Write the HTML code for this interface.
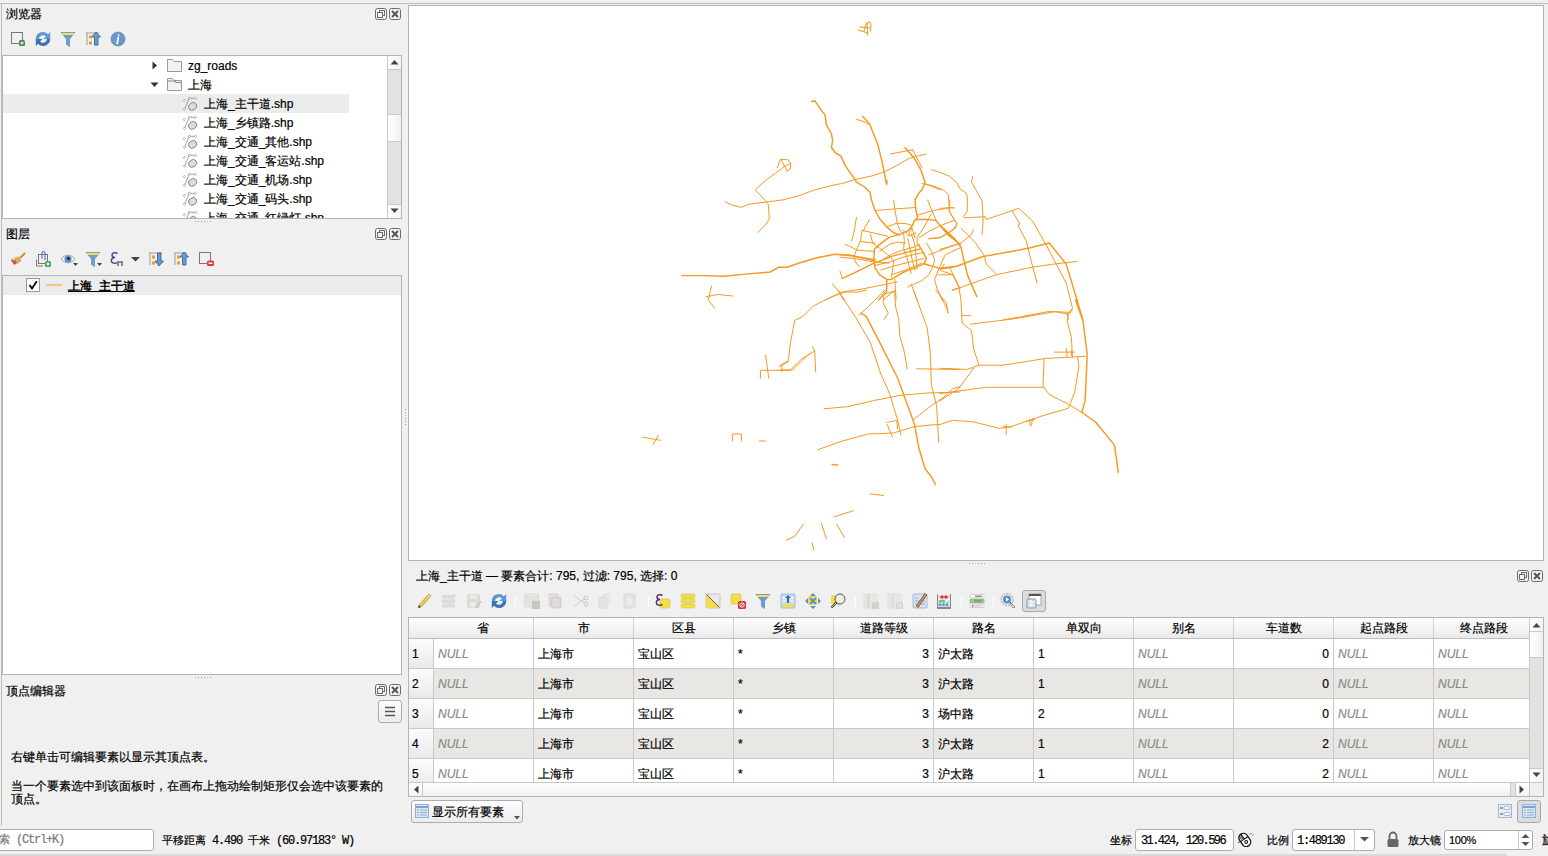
<!DOCTYPE html><html><head><meta charset="utf-8"><style>
*{box-sizing:border-box;margin:0;padding:0}
html,body{width:1548px;height:856px;overflow:hidden;background:#f0f0f0;font-family:"Liberation Sans",sans-serif;font-size:12px;color:#000;-webkit-text-stroke-width:0.2px}
.abs{position:absolute}
.t{position:absolute;white-space:nowrap;line-height:14px}
.hl{position:absolute;height:1px;background:#b9b9b9}
.vl{position:absolute;width:1px;background:#b9b9b9}
.fbtn{position:absolute;width:12px;height:12px;border:1px solid #6e6e6e;border-radius:3px;background:#f4f4f4}
svg{position:absolute;overflow:visible}
.cell{position:absolute;height:29px;line-height:29px;white-space:nowrap;overflow:hidden}
.null{font-style:italic;color:#8a8a8a}
.num{text-align:right}
.hdr{position:absolute;top:618px;height:20px;line-height:20px;text-align:center;background:linear-gradient(#ffffff,#f3f3f3 55%,#e9e9e9)}
.mono{font-family:"Liberation Mono",monospace}
</style></head><body>
<div class="hl" style="left:0;top:3px;width:1548px;background:#bdbdbd"></div>
<div class="vl" style="left:1px;top:4px;height:822px;background:#bdbdbd"></div>
<div class="t" style="left:6px;top:7px">浏览器</div>
<svg style="left:375px;top:8px" width="12" height="12" viewBox="0 0 12 12"><rect x="0.5" y="0.5" width="11" height="11" rx="2" fill="#f3f3f3" stroke="#6b6b6b"/><rect x="4.5" y="2.5" width="5" height="5" fill="none" stroke="#6b6b6b"/><rect x="2.5" y="4.5" width="5" height="5" fill="#f3f3f3" stroke="#6b6b6b"/></svg>
<svg style="left:389px;top:8px" width="12" height="12" viewBox="0 0 12 12"><rect x="0.5" y="0.5" width="11" height="11" rx="2" fill="#f3f3f3" stroke="#6b6b6b"/><path d="M3 3L9 9M9 3L3 9" stroke="#555" stroke-width="2"/></svg>
<svg style="left:10px;top:31px" width="16" height="16"><rect x="1.5" y="1.5" width="11" height="11" fill="#f0f0f0" stroke="#777"/><rect x="9" y="9" width="6" height="6" rx="1.5" fill="#4a8a4a"/><circle cx="12" cy="12" r="1.6" fill="#ddd"/></svg>
<svg style="left:35px;top:31px" width="16" height="16"><path d="M0.8 8.2A7 7 0 0 1 13 3.3L15.2 1V8H8.4L11 5.4A4.2 4.2 0 0 0 3.9 8.2Z" fill="#5c97d6"/><path d="M15.2 7.8A7 7 0 0 1 3 12.7L0.8 15V8H7.6L5 10.6A4.2 4.2 0 0 0 12.1 7.8Z" fill="#3b73b5"/></svg>
<svg style="left:60px;top:31px" width="16" height="16"><path d="M1 1.5H15L9.5 8V15.5L6.5 13.5V8Z" fill="#6e9bd0" stroke="#5580b5" stroke-width="0.6"/><rect x="2" y="2" width="12" height="2" fill="#f4e04a"/></svg>
<svg style="left:85px;top:31px" width="16" height="16"><path d="M1 2H14M2 2V14" stroke="#999" stroke-width="1"/><rect x="4" y="4.5" width="3" height="3" fill="#f39a1c"/><rect x="4" y="10.5" width="3" height="3" fill="#f39a1c"/><path d="M11 1L15.5 6H13V14H9.5V6H7Z" fill="#6a9ad2" stroke="#2f5a8a" stroke-width="0.8"/></svg>
<svg style="left:110px;top:31px" width="16" height="16"><circle cx="8" cy="8" r="7" fill="#6b96cb" stroke="#4d78ad" stroke-width="0.6"/><path d="M8.6 4.2v0.1M7.2 12.5L8.2 6.6" stroke="#fff" stroke-width="1.8" stroke-linecap="round"/></svg>
<div class="abs" style="left:2px;top:55px;width:400px;height:164px;background:#fff;border:1px solid #b4b4b4"></div>
<div class="abs" style="left:387px;top:56px;width:14px;height:162px;background:#e2e2e2;border-left:1px solid #c8c8c8"></div>
<div class="abs" style="left:387px;top:56px;width:14px;height:14px;background:linear-gradient(90deg,#fff,#f4f4f4);border-left:1px solid #c8c8c8;border-bottom:1px solid #c8c8c8"></div>
<svg style="left:390px;top:59px" width="9" height="6"><path d="M0.5 5.5L4.5 1L8.5 5.5Z" fill="#444"/></svg>
<div class="abs" style="left:387px;top:114px;width:14px;height:28px;background:linear-gradient(90deg,#fff,#f1f1f1);border:1px solid #c8c8c8;border-right:0"></div>
<div class="abs" style="left:387px;top:204px;width:14px;height:14px;background:linear-gradient(90deg,#fff,#f4f4f4);border-left:1px solid #c8c8c8;border-top:1px solid #c8c8c8"></div>
<svg style="left:390px;top:208px" width="9" height="6"><path d="M0.5 0.5L4.5 5L8.5 0.5Z" fill="#444"/></svg>
<div class="abs" style="left:3px;top:94px;width:346px;height:19px;background:#ececec"></div>
<svg style="left:152px;top:61px" width="6" height="9"><path d="M0.5 0.5L5 4.5L0.5 8.5Z" fill="#333"/></svg>
<svg style="left:167px;top:59px" width="15" height="13"><path d="M0.5 0.5H5.5L7 2.5H14.5V12.5H0.5Z" fill="#f2f2f2" stroke="#9a9a9a"/></svg>
<div class="t" style="left:188px;top:59px">zg_roads</div>
<svg style="left:150px;top:82px" width="9" height="6"><path d="M0.5 0.5L8.5 0.5L4.5 5Z" fill="#333"/></svg>
<svg style="left:167px;top:78px" width="15" height="13"><path d="M0.5 0.5H5.5L7 2.5H14.5V12.5H0.5Z" fill="#f2f2f2" stroke="#9a9a9a"/><path d="M1 3H8L9 4.5H14" stroke="#888" stroke-width="1.2" fill="none"/></svg>
<div class="t" style="left:188px;top:78px">上海</div>
<svg style="left:183px;top:96px" width="15" height="16"><path d="M6.3 2.2L12.5 2.4M6.3 2.2L1.5 13.3" stroke="#8a8a8a" stroke-width="0.8" fill="none"/><ellipse cx="9.6" cy="10.4" rx="4.3" ry="3.6" transform="rotate(-35 9.6 10.4)" fill="#dcdcdc" stroke="#7a7a7a" stroke-width="0.8"/><rect x="0.4" y="3.6" width="1.8" height="1.8" transform="rotate(45 1.3 4.5)" fill="#fff" stroke="#888" stroke-width="0.6"/><rect x="5.4" y="1.3" width="1.8" height="1.8" transform="rotate(45 6.3 2.2)" fill="#fff" stroke="#888" stroke-width="0.6"/><rect x="11.6" y="1.5" width="1.8" height="1.8" transform="rotate(45 12.5 2.4)" fill="#fff" stroke="#888" stroke-width="0.6"/><rect x="0.6" y="12.4" width="1.8" height="1.8" transform="rotate(45 1.5 13.3)" fill="#fff" stroke="#888" stroke-width="0.6"/></svg>
<div class="t" style="left:204px;top:97px">上海_主干道.shp</div>
<svg style="left:183px;top:115px" width="15" height="16"><path d="M6.3 2.2L12.5 2.4M6.3 2.2L1.5 13.3" stroke="#8a8a8a" stroke-width="0.8" fill="none"/><ellipse cx="9.6" cy="10.4" rx="4.3" ry="3.6" transform="rotate(-35 9.6 10.4)" fill="#dcdcdc" stroke="#7a7a7a" stroke-width="0.8"/><rect x="0.4" y="3.6" width="1.8" height="1.8" transform="rotate(45 1.3 4.5)" fill="#fff" stroke="#888" stroke-width="0.6"/><rect x="5.4" y="1.3" width="1.8" height="1.8" transform="rotate(45 6.3 2.2)" fill="#fff" stroke="#888" stroke-width="0.6"/><rect x="11.6" y="1.5" width="1.8" height="1.8" transform="rotate(45 12.5 2.4)" fill="#fff" stroke="#888" stroke-width="0.6"/><rect x="0.6" y="12.4" width="1.8" height="1.8" transform="rotate(45 1.5 13.3)" fill="#fff" stroke="#888" stroke-width="0.6"/></svg>
<div class="t" style="left:204px;top:116px">上海_乡镇路.shp</div>
<svg style="left:183px;top:134px" width="15" height="16"><path d="M6.3 2.2L12.5 2.4M6.3 2.2L1.5 13.3" stroke="#8a8a8a" stroke-width="0.8" fill="none"/><ellipse cx="9.6" cy="10.4" rx="4.3" ry="3.6" transform="rotate(-35 9.6 10.4)" fill="#dcdcdc" stroke="#7a7a7a" stroke-width="0.8"/><rect x="0.4" y="3.6" width="1.8" height="1.8" transform="rotate(45 1.3 4.5)" fill="#fff" stroke="#888" stroke-width="0.6"/><rect x="5.4" y="1.3" width="1.8" height="1.8" transform="rotate(45 6.3 2.2)" fill="#fff" stroke="#888" stroke-width="0.6"/><rect x="11.6" y="1.5" width="1.8" height="1.8" transform="rotate(45 12.5 2.4)" fill="#fff" stroke="#888" stroke-width="0.6"/><rect x="0.6" y="12.4" width="1.8" height="1.8" transform="rotate(45 1.5 13.3)" fill="#fff" stroke="#888" stroke-width="0.6"/></svg>
<div class="t" style="left:204px;top:135px">上海_交通_其他.shp</div>
<svg style="left:183px;top:153px" width="15" height="16"><path d="M6.3 2.2L12.5 2.4M6.3 2.2L1.5 13.3" stroke="#8a8a8a" stroke-width="0.8" fill="none"/><ellipse cx="9.6" cy="10.4" rx="4.3" ry="3.6" transform="rotate(-35 9.6 10.4)" fill="#dcdcdc" stroke="#7a7a7a" stroke-width="0.8"/><rect x="0.4" y="3.6" width="1.8" height="1.8" transform="rotate(45 1.3 4.5)" fill="#fff" stroke="#888" stroke-width="0.6"/><rect x="5.4" y="1.3" width="1.8" height="1.8" transform="rotate(45 6.3 2.2)" fill="#fff" stroke="#888" stroke-width="0.6"/><rect x="11.6" y="1.5" width="1.8" height="1.8" transform="rotate(45 12.5 2.4)" fill="#fff" stroke="#888" stroke-width="0.6"/><rect x="0.6" y="12.4" width="1.8" height="1.8" transform="rotate(45 1.5 13.3)" fill="#fff" stroke="#888" stroke-width="0.6"/></svg>
<div class="t" style="left:204px;top:154px">上海_交通_客运站.shp</div>
<svg style="left:183px;top:172px" width="15" height="16"><path d="M6.3 2.2L12.5 2.4M6.3 2.2L1.5 13.3" stroke="#8a8a8a" stroke-width="0.8" fill="none"/><ellipse cx="9.6" cy="10.4" rx="4.3" ry="3.6" transform="rotate(-35 9.6 10.4)" fill="#dcdcdc" stroke="#7a7a7a" stroke-width="0.8"/><rect x="0.4" y="3.6" width="1.8" height="1.8" transform="rotate(45 1.3 4.5)" fill="#fff" stroke="#888" stroke-width="0.6"/><rect x="5.4" y="1.3" width="1.8" height="1.8" transform="rotate(45 6.3 2.2)" fill="#fff" stroke="#888" stroke-width="0.6"/><rect x="11.6" y="1.5" width="1.8" height="1.8" transform="rotate(45 12.5 2.4)" fill="#fff" stroke="#888" stroke-width="0.6"/><rect x="0.6" y="12.4" width="1.8" height="1.8" transform="rotate(45 1.5 13.3)" fill="#fff" stroke="#888" stroke-width="0.6"/></svg>
<div class="t" style="left:204px;top:173px">上海_交通_机场.shp</div>
<svg style="left:183px;top:191px" width="15" height="16"><path d="M6.3 2.2L12.5 2.4M6.3 2.2L1.5 13.3" stroke="#8a8a8a" stroke-width="0.8" fill="none"/><ellipse cx="9.6" cy="10.4" rx="4.3" ry="3.6" transform="rotate(-35 9.6 10.4)" fill="#dcdcdc" stroke="#7a7a7a" stroke-width="0.8"/><rect x="0.4" y="3.6" width="1.8" height="1.8" transform="rotate(45 1.3 4.5)" fill="#fff" stroke="#888" stroke-width="0.6"/><rect x="5.4" y="1.3" width="1.8" height="1.8" transform="rotate(45 6.3 2.2)" fill="#fff" stroke="#888" stroke-width="0.6"/><rect x="11.6" y="1.5" width="1.8" height="1.8" transform="rotate(45 12.5 2.4)" fill="#fff" stroke="#888" stroke-width="0.6"/><rect x="0.6" y="12.4" width="1.8" height="1.8" transform="rotate(45 1.5 13.3)" fill="#fff" stroke="#888" stroke-width="0.6"/></svg>
<div class="t" style="left:204px;top:192px">上海_交通_码头.shp</div>
<svg style="left:183px;top:210px" width="15" height="16"><path d="M6.3 2.2L12.5 2.4M6.3 2.2L1.5 13.3" stroke="#8a8a8a" stroke-width="0.8" fill="none"/><ellipse cx="9.6" cy="10.4" rx="4.3" ry="3.6" transform="rotate(-35 9.6 10.4)" fill="#dcdcdc" stroke="#7a7a7a" stroke-width="0.8"/><rect x="0.4" y="3.6" width="1.8" height="1.8" transform="rotate(45 1.3 4.5)" fill="#fff" stroke="#888" stroke-width="0.6"/><rect x="5.4" y="1.3" width="1.8" height="1.8" transform="rotate(45 6.3 2.2)" fill="#fff" stroke="#888" stroke-width="0.6"/><rect x="11.6" y="1.5" width="1.8" height="1.8" transform="rotate(45 12.5 2.4)" fill="#fff" stroke="#888" stroke-width="0.6"/><rect x="0.6" y="12.4" width="1.8" height="1.8" transform="rotate(45 1.5 13.3)" fill="#fff" stroke="#888" stroke-width="0.6"/></svg>
<div class="t" style="left:204px;top:211px">上海_交通_红绿灯.shp</div>
<div class="abs" style="left:2px;top:218px;width:386px;height:10px;background:#f0f0f0;border-top:1px solid #b4b4b4"></div>
<div class="abs" style="left:3px;top:55px;width:384px;height:1px;background:#b4b4b4"></div>
<div class="t" style="left:6px;top:227px">图层</div>
<svg style="left:375px;top:228px" width="12" height="12" viewBox="0 0 12 12"><rect x="0.5" y="0.5" width="11" height="11" rx="2" fill="#f3f3f3" stroke="#6b6b6b"/><rect x="4.5" y="2.5" width="5" height="5" fill="none" stroke="#6b6b6b"/><rect x="2.5" y="4.5" width="5" height="5" fill="#f3f3f3" stroke="#6b6b6b"/></svg>
<svg style="left:389px;top:228px" width="12" height="12" viewBox="0 0 12 12"><rect x="0.5" y="0.5" width="11" height="11" rx="2" fill="#f3f3f3" stroke="#6b6b6b"/><path d="M3 3L9 9M9 3L3 9" stroke="#555" stroke-width="2"/></svg>
<svg style="left:10px;top:251px" width="16" height="16"><path d="M1 9L6 6L9 11L4 14Z" fill="#e64a4a"/><path d="M1 9L6 6L7 8L2 11Z" fill="#4a7ad0"/><path d="M2 8L7 5L8 7L3 10Z" fill="#f1d84a"/><path d="M5 8L9 5.5L11.5 10L7 13Z" fill="#d9a766"/><path d="M10 7L15 2" stroke="#c9902e" stroke-width="2"/></svg>
<svg style="left:35px;top:251px" width="16" height="16"><path d="M1.5 15V8.5M1.5 15H8" stroke="#777" fill="none"/><rect x="3.5" y="3.5" width="9" height="9" fill="#f0f0f0" stroke="#777"/><path d="M7 8V2A1.5 1.5 0 0 1 10 2V9" stroke="#4a78b5" stroke-width="1.1" fill="none"/><rect x="10" y="10" width="6" height="6" rx="1.5" fill="#4a9a4a"/><path d="M13 11V15M11 13H15" stroke="#dff" stroke-width="1.2"/></svg>
<svg style="left:60px;top:251px" width="20" height="16"><path d="M1 8C4 3 12 3 15 8C12 13 4 13 1 8Z" fill="#eef" stroke="#999" stroke-width="0.8"/><circle cx="8" cy="8" r="3.5" fill="#5b8dd0"/><circle cx="8.5" cy="7.5" r="1.3" fill="#111"/><path d="M13 12H18L15.5 15Z" fill="#444"/></svg>
<svg style="left:85px;top:251px" width="20" height="16"><path d="M1 1.5H15L9.5 8V15.5L6.5 13.5V8Z" fill="#6e9bd0" stroke="#5580b5" stroke-width="0.6"/><rect x="2" y="2" width="12" height="2" fill="#f4e04a"/><path d="M12 12H17L14.5 15Z" fill="#444"/></svg>
<svg style="left:110px;top:251px" width="16" height="16"><path d="M7.5 2.6C6 1 2 1.5 2 4C2 5.6 3.5 6.5 5 6.5C3 6.5 1.3 7.6 1.3 9.6C1.3 12.4 5 13 7.5 11.3" fill="none" stroke="#6a3a8a" stroke-width="1.5"/><path d="M7 10H13V15H11V12H9V15H7Z" fill="#888"/></svg>
<svg style="left:131px;top:257px" width="9" height="6"><path d="M0 0H9L4.5 4.5Z" fill="#444"/></svg>
<svg style="left:148px;top:251px" width="16" height="16"><path d="M1 2H14M2 2V14" stroke="#999"/><rect x="4" y="4.5" width="3" height="3" fill="#f39a1c"/><rect x="4" y="10.5" width="3" height="3" fill="#f39a1c"/><path d="M11 15L15.5 10H13V2H9.5V10H7Z" fill="#6a9ad2" stroke="#2f5a8a" stroke-width="0.8"/></svg>
<svg style="left:173px;top:251px" width="16" height="16"><path d="M1 2H14M2 2V14" stroke="#999"/><rect x="4" y="4.5" width="3" height="3" fill="#f39a1c"/><rect x="4" y="10.5" width="3" height="3" fill="#f39a1c"/><path d="M11 1L15.5 6H13V14H9.5V6H7Z" fill="#6a9ad2" stroke="#2f5a8a" stroke-width="0.8"/></svg>
<svg style="left:198px;top:251px" width="16" height="16"><rect x="1.5" y="1.5" width="11" height="11" fill="#f0f0f0" stroke="#777"/><rect x="9" y="9.5" width="7" height="5.5" rx="1.5" fill="#e23b3b"/><path d="M10.5 12.2H14.5" stroke="#fff" stroke-width="1.4"/></svg>
<div class="abs" style="left:2px;top:275px;width:400px;height:400px;background:#fff;border:1px solid #b4b4b4"></div>
<div class="abs" style="left:3px;top:276px;width:398px;height:19px;background:#ececec"></div>
<div class="abs" style="left:26px;top:278px;width:14px;height:14px;background:#fff;border:1px solid #9a9a9a"></div>
<svg style="left:28px;top:280px" width="10" height="10"><path d="M1.5 5L4 8.5L8.8 1.2" stroke="#000" stroke-width="1.8" fill="none"/></svg>
<div class="abs" style="left:46px;top:284px;width:16px;height:2px;background:#f6c57e"></div>
<div class="t" style="left:68px;top:279px;font-weight:bold;text-decoration:underline;-webkit-text-stroke-width:0">上海_主干道</div>
<div class="abs" style="left:195px;top:221px;width:1px;height:1px;background:#a0a0a0"></div>
<div class="abs" style="left:198px;top:221px;width:1px;height:1px;background:#a0a0a0"></div>
<div class="abs" style="left:201px;top:221px;width:1px;height:1px;background:#a0a0a0"></div>
<div class="abs" style="left:204px;top:221px;width:1px;height:1px;background:#a0a0a0"></div>
<div class="abs" style="left:207px;top:221px;width:1px;height:1px;background:#a0a0a0"></div>
<div class="abs" style="left:210px;top:221px;width:1px;height:1px;background:#a0a0a0"></div>
<div class="abs" style="left:195px;top:677px;width:1px;height:1px;background:#a0a0a0"></div>
<div class="abs" style="left:198px;top:677px;width:1px;height:1px;background:#a0a0a0"></div>
<div class="abs" style="left:201px;top:677px;width:1px;height:1px;background:#a0a0a0"></div>
<div class="abs" style="left:204px;top:677px;width:1px;height:1px;background:#a0a0a0"></div>
<div class="abs" style="left:207px;top:677px;width:1px;height:1px;background:#a0a0a0"></div>
<div class="abs" style="left:210px;top:677px;width:1px;height:1px;background:#a0a0a0"></div>
<div class="abs" style="left:405px;top:409px;width:1px;height:1px;background:#a0a0a0"></div>
<div class="abs" style="left:405px;top:412px;width:1px;height:1px;background:#a0a0a0"></div>
<div class="abs" style="left:405px;top:415px;width:1px;height:1px;background:#a0a0a0"></div>
<div class="abs" style="left:405px;top:418px;width:1px;height:1px;background:#a0a0a0"></div>
<div class="abs" style="left:405px;top:421px;width:1px;height:1px;background:#a0a0a0"></div>
<div class="abs" style="left:405px;top:424px;width:1px;height:1px;background:#a0a0a0"></div>
<div class="t" style="left:6px;top:684px">顶点编辑器</div>
<svg style="left:375px;top:684px" width="12" height="12" viewBox="0 0 12 12"><rect x="0.5" y="0.5" width="11" height="11" rx="2" fill="#f3f3f3" stroke="#6b6b6b"/><rect x="4.5" y="2.5" width="5" height="5" fill="none" stroke="#6b6b6b"/><rect x="2.5" y="4.5" width="5" height="5" fill="#f3f3f3" stroke="#6b6b6b"/></svg>
<svg style="left:389px;top:684px" width="12" height="12" viewBox="0 0 12 12"><rect x="0.5" y="0.5" width="11" height="11" rx="2" fill="#f3f3f3" stroke="#6b6b6b"/><path d="M3 3L9 9M9 3L3 9" stroke="#555" stroke-width="2"/></svg>
<div class="abs" style="left:378px;top:700px;width:24px;height:23px;border:1px solid #adadad;border-radius:3px;background:linear-gradient(#fdfdfd,#ececec)"></div>
<svg style="left:384px;top:706px" width="12" height="11"><path d="M1 1.5H11M1 5.5H11M1 9.5H11" stroke="#555" stroke-width="1.6"/></svg>
<div class="t" style="left:11px;top:750px">右键单击可编辑要素以显示其顶点表。</div>
<div class="t" style="left:11px;top:779px">当一个要素选中到该面板时，在画布上拖动绘制矩形仅会选中该要素的</div>
<div class="t" style="left:11px;top:792px">顶点。</div>
<div class="abs" style="left:408px;top:5px;width:1136px;height:556px;background:#fff;border:1px solid #b4b4b4"></div>
<svg style="left:0;top:0" width="1548" height="856" viewBox="0 0 1548 856"><g fill="none" stroke="#f7981f" stroke-linejoin="round" stroke-linecap="round"><path stroke-width="1.0" d="M858.0 30.0 L868.0 33.0 M860.0 27.0 L870.0 28.0 M867.0 22.6 L867.7 35.2 M864.0 31.0 L866.0 24.0 L869.4 21.6 L871.0 25.0 L870.5 31.0 M856.4 119.3 L863.1 121.4 L869.4 124.6 M725.2 202.0 L732.5 205.2 L740.9 207.3 L749.3 204.1 L766.2 202.0 L783.0 199.9 L800.0 195.4 L814.7 189.8 L831.5 185.6 L842.0 183.5 L855.7 179.3 L871.5 176.1 L884.1 171.9 L896.7 165.6 L909.3 158.2 L926.2 154.0 M890.4 154.0 L912.5 149.8 M912.5 149.8 L922.0 167.7 M931.4 169.8 L938.8 171.9 L949.3 176.1 L956.6 182.4 L959.8 188.7 L966.0 193.0 L967.3 196.8 L967.3 211.5 L963.1 216.7 M922.0 183.5 L932.5 185.6 L943.0 189.8 L948.4 194.7 L949.5 211.5 L956.8 224.1 L952.6 230.4 L940.0 237.8 L929.0 238.9 M757.7 232.5 L766.2 224.1 L769.3 218.8 L768.3 204.1 L762.0 196.8 L755.2 190.0 L766.2 180.0 L784.6 166.4 M777.3 167.6 L780.5 159.4 L787.9 159.8 L790.8 163.1 L790.3 169.2 L786.7 171.3 M781.4 160.2 L786.7 170.4 M784.6 166.4 L790.3 163.5 M711.5 286.1 L708.3 299.8 L714.6 308.2 M706.2 296.6 L717.8 294.5 L732.5 296.0 M887.0 180.0 L887.2 183.5 M926.2 184.2 L940.3 189.8 M875.0 210.5 L896.1 208.8 L914.8 207.6 M893.7 200.0 L894.9 209.3 L897.2 223.4 L900.7 231.5 L903.7 233.9 L904.3 240.9 L903.7 249.1 L906.6 256.1 L908.9 265.4 L911.3 273.6 M917.1 215.2 L933.5 210.5 L949.8 207.6 L953.9 207.9 M927.6 200.0 L932.3 211.7 L937.0 222.2 L942.8 228.0 L947.5 235.0 L960.0 244.4 M949.8 200.0 L949.2 211.7 L956.8 223.4 L955.7 228.0 L940.5 237.4 L928.8 238.6 M931.1 214.0 L924.1 226.9 L917.1 237.4 L917.1 244.4 M953.9 220.4 L940.5 225.7 L928.8 231.5 L919.4 237.4 M960.0 243.2 L928.8 254.9 M960.0 247.9 L945.1 254.9 L939.3 267.8 L934.6 279.4 L937.0 288.8 L942.8 300.0 M949.8 267.8 L956.8 281.8 L960.0 288.8 M938.1 274.8 L952.1 274.8 M926.4 243.2 L932.3 252.6 L934.6 260.7 L932.3 267.8 L928.8 274.8 L921.8 280.6 L907.8 287.0 M911.3 284.1 L917.1 300.0 M840.0 254.9 L851.7 256.1 L863.4 258.4 L873.9 260.7 M840.0 257.2 L854.0 258.4 L873.9 261.9 L889.1 263.1 M842.3 278.3 L840.0 271.3 M845.3 244.4 L857.5 250.2 L873.9 251.4 M862.2 230.4 L860.4 240.9 L854.0 256.1 L855.2 261.9 L859.3 266.6 M862.2 230.4 L887.9 236.2 M860.4 241.5 L875.0 243.2 M869.8 219.3 L863.4 230.4 M856.4 217.5 L854.0 232.7 L851.7 240.9 M886.7 226.9 L896.1 223.4 L905.4 223.4 L912.4 225.7 M870.4 233.9 L872.7 243.2 L880.9 249.1 L889.1 256.1 L893.7 260.7 L892.6 270.1 L891.4 277.1 M879.7 251.4 L889.1 244.4 L898.4 242.1 L905.4 243.2 M884.4 258.4 L892.6 253.7 L903.1 250.2 L914.8 246.7 L919.4 244.4 M875.0 265.4 L890.2 261.9 L903.1 257.2 L917.1 253.7 L924.1 252.6 M880.9 270.1 L896.1 265.4 L910.1 261.9 L924.1 258.4 M891.4 274.8 L905.4 270.1 L921.8 263.1 M911.3 233.9 L914.8 244.4 L915.9 254.9 L917.1 268.9 M907.8 238.6 L910.1 249.1 L912.4 260.7 L914.8 270.1 M894.9 279.4 L896.1 300.0 M840.0 292.3 L863.4 288.8 L886.7 284.1 L897.2 281.8 M883.2 300.0 L893.7 291.1 M840.0 293.5 L844.7 300.0 M952.1 290.0 L960.0 287.6 M832.3 283.8 L839.3 292.2 L843.5 300.0 M825.2 300.0 L839.3 293.6 M903.0 230.0 L910.0 236.0 L916.0 233.0 M908.0 236.0 L912.0 228.0 L915.0 238.0 M940.0 208.3 L953.7 207.7 M972.6 176.8 L971.5 182.0 L982.1 201.0 L983.1 219.9 L982.1 234.6 M964.2 217.8 L985.2 216.7 L986.3 219.5 L1018.8 208.3 L1032.5 221.0 L1045.1 243.0 L1066.2 283.0 L1072.5 308.2 L1067.2 314.5 L1068.3 320.0 M1012.5 211.5 L1019.9 224.1 L1017.8 225.2 L1026.2 240.9 L1032.5 266.2 L1037.1 283.0 M940.0 249.3 L961.0 243.0 L971.5 234.6 L973.6 229.4 M961.0 228.3 L975.7 243.0 L984.2 255.6 L986.3 264.1 L996.8 274.6 L1032.5 267.2 L1053.5 264.1 L1076.7 261.5 M944.2 264.1 L940.0 270.4 L952.6 274.6 L958.9 287.2 L961.0 300.0 L962.1 323.1 L971.5 330.5 L973.6 348.4 L978.9 365.2 M952.6 290.3 L996.8 274.6 M1003.1 320.0 L1049.3 311.4 L1070.4 312.4 M940.0 295.6 L944.2 303.2 L948.4 312.6 M962.1 315.6 L970.5 315.6 M970.5 324.2 L1013.6 318.9 L1055.6 311.6 L1068.3 314.3 L1072.5 309.5 M1068.3 314.3 L1067.2 321.0 L1071.4 337.8 L1072.5 356.8 M940.0 368.3 L967.3 369.4 L978.9 365.2 L1003.1 365.2 L1045.1 358.5 L1085.1 356.4 M1054.6 352.1 L1074.6 352.1 M1066.2 348.4 L1067.2 356.8 M1071.4 350.5 L1071.4 355.7 M1044.1 358.9 L1043.0 386.2 L1049.3 394.6 L1068.3 404.1 L1081.9 412.5 M1077.7 356.8 L1078.8 367.3 L1074.6 392.5 L1068.3 408.3 L1043.0 415.6 L1009.4 427.2 L998.9 428.3 L973.6 421.9 L952.6 420.3 L940.0 424.5 L935.6 424.6 L914.6 426.6 L893.5 433.0 L868.3 434.0 L841.0 441.4 L817.8 449.8 M973.6 368.3 L958.9 388.3 L940.0 400.9 M940.0 393.6 L986.3 387.3 L1044.1 387.3 M1003.1 426.2 L1011.5 427.2 M1006.2 424.0 L1006.2 434.6 M1026.2 420.9 L1034.6 419.8 M1029.4 419.8 L1030.4 426.2 M1032.5 418.8 L1031.5 425.1 M866.2 290.0 L857.8 292.1 L845.2 292.1 L832.6 296.3 L813.6 305.8 L803.1 316.3 L794.7 320.5 L790.5 342.6 L788.4 360.4 L780.0 365.7 M780.0 369.9 L790.5 369.9 L801.0 359.4 L814.7 351.0 L812.6 346.8 M814.7 351.0 L815.7 372.0 M837.8 290.0 L841.0 295.3 L855.7 317.3 L870.4 342.6 L880.9 374.1 L889.3 393.0 L897.7 420.4 L900.9 435.1 M885.1 290.0 L868.3 306.8 L858.8 315.2 M894.6 291.1 L884.1 294.2 L883.1 302.6 L888.3 313.1 L884.1 319.4 M894.6 291.1 L895.6 306.8 L898.8 319.4 L899.8 336.3 L904.1 351.0 L907.2 368.8 M913.5 290.0 L927.2 327.8 L930.3 353.1 L931.4 384.6 L936.6 405.6 L938.7 442.4 M916.7 368.8 L960.0 369.5 M824.2 408.8 L847.3 406.7 L874.6 400.4 L902.0 395.1 L927.2 393.0 L960.0 392.0 M912.5 420.4 L931.4 405.6 L944.0 397.2 L952.4 388.8 L960.0 386.7 M887.2 422.5 L896.7 420.4 L897.7 428.8 M887.2 424.6 L892.5 437.2 M935.6 290.0 L946.1 302.6 L948.2 313.1 M760.4 378.3 L760.4 370.3 L791.9 370.3 L810.0 353.1 M765.6 355.2 L768.8 378.3 M779.3 366.7 L788.7 361.5 M782.0 366.0 L782.0 372.0 M642.6 437.2 L660.5 440.3 M658.4 435.1 L653.1 444.5 M732.4 441.0 L732.4 434.0 L741.4 434.0 L741.4 441.0 M759.3 441.0 L765.6 441.0 M870.0 493.9 L883.6 495.5 M834.1 516.8 L853.4 510.7 M786.3 540.2 L794.5 536.4 L803.5 524.1 M821.5 523.3 L826.4 539.0 M836.7 524.3 L844.4 537.4 M812.2 542.9 L813.8 550.0"/><path stroke-width="1.45" d="M811.6 101.5 L814.7 100.8 L816.8 103.6 L821.0 109.9 L825.2 115.1 L826.3 124.6 L831.5 134.0 L832.6 140.4 L831.5 147.7 L835.7 153.0 L841.0 156.1 L845.2 165.6 L852.6 176.1 L856.8 182.4 L864.5 187.0 L870.1 192.6 L871.5 200.0 L875.0 210.5 L879.7 218.7 L886.7 226.9 L893.7 232.7 L899.6 235.0 M862.4 116.2 L869.4 123.5 L877.8 144.6 L882.0 161.4 L886.6 184.5 M905.1 147.7 L913.5 157.2 L920.9 169.8 L925.1 182.4 L922.0 189.8 L919.2 192.6 L915.0 199.6 L915.9 210.5 L917.7 217.5 L914.2 221.0 L912.4 225.7 L907.8 231.0 L900.7 233.9 L889.1 237.4 L879.7 244.4 L874.5 249.1 L873.9 258.4 L875.0 267.8 L879.7 274.8 L886.7 279.4 L891.4 279.4 L903.1 272.4 L914.8 267.8 L924.1 263.7 L926.4 258.4 L921.8 250.2 L918.3 244.4 M682.0 275.6 L703.1 275.6 L724.1 276.2 L745.1 274.1 L770.4 272.0 L778.8 267.2 L787.2 267.2 L800.0 262.7 L816.8 257.8 L835.0 254.3 L849.1 255.0 L856.1 256.4 L867.3 258.5 L875.7 259.9 M914.8 219.9 L924.1 219.3 L935.8 220.4 L945.1 231.5 L960.0 244.4 M924.1 263.7 L933.5 266.6 L941.6 268.9 L949.8 267.8 L960.0 265.4 M842.3 278.3 L857.5 271.3 L873.9 263.1 L880.9 260.7 L892.6 256.1 L905.4 252.6 L919.4 249.1 M886.7 279.4 L886.7 291.1 L878.6 300.0 M940.0 268.3 L956.8 266.2 L982.1 256.7 L1028.3 248.3 L1049.3 243.0 L1066.2 264.1 L1083.0 320.0 M940.0 225.2 L954.7 238.8 L961.0 247.2 L967.3 274.6 L976.8 296.6 M1075.6 300.0 L1083.0 321.0 L1087.2 354.7 L1085.1 400.9 L1081.9 412.5 L1095.6 422.0 L1114.5 445.1 L1118.3 472.4 M861.0 313.1 L866.2 316.3 L880.9 344.7 L897.7 378.3 L914.6 424.6 L918.8 447.7 L925.1 468.7 L931.8 477.2 L935.4 484.6 M832.1 464.5 L837.8 465.0"/></g></svg>
<div class="abs" style="left:969px;top:563px;width:1px;height:1px;background:#a0a0a0"></div>
<div class="abs" style="left:972px;top:563px;width:1px;height:1px;background:#a0a0a0"></div>
<div class="abs" style="left:975px;top:563px;width:1px;height:1px;background:#a0a0a0"></div>
<div class="abs" style="left:978px;top:563px;width:1px;height:1px;background:#a0a0a0"></div>
<div class="abs" style="left:981px;top:563px;width:1px;height:1px;background:#a0a0a0"></div>
<div class="abs" style="left:984px;top:563px;width:1px;height:1px;background:#a0a0a0"></div>
<div class="t" style="left:416px;top:569px">上海_主干道 — 要素合计: 795, 过滤: 795, 选择: 0</div>
<svg style="left:1517px;top:570px" width="12" height="12" viewBox="0 0 12 12"><rect x="0.5" y="0.5" width="11" height="11" rx="2" fill="#f3f3f3" stroke="#6b6b6b"/><rect x="4.5" y="2.5" width="5" height="5" fill="none" stroke="#6b6b6b"/><rect x="2.5" y="4.5" width="5" height="5" fill="#f3f3f3" stroke="#6b6b6b"/></svg>
<svg style="left:1531px;top:570px" width="12" height="12" viewBox="0 0 12 12"><rect x="0.5" y="0.5" width="11" height="11" rx="2" fill="#f3f3f3" stroke="#6b6b6b"/><path d="M3 3L9 9M9 3L3 9" stroke="#555" stroke-width="2"/></svg>
<svg style="left:416px;top:593px" width="16" height="16" viewBox="0 0 16 16"><path d="M13 1L15 3L5 14L2 15L3 12Z" fill="#e7d443" stroke="#9a8a2a" stroke-width="0.7"/><path d="M2 15L3 12L5 14Z" fill="#555"/><path d="M12 2L14 4" stroke="#ddd" stroke-width="1.5"/></svg>
<svg style="left:441px;top:593px" width="16" height="16" viewBox="0 0 16 16"><rect x="1" y="2" width="13" height="3.5" rx="1.2" fill="#dcdbd5"/><rect x="1" y="6.5" width="13" height="3.5" rx="1.2" fill="#dcdbd5"/><rect x="1" y="11" width="13" height="3.5" rx="1.2" fill="#dcdbd5"/><path d="M14 1L6 14" stroke="#e8e8e8" stroke-width="2.5"/><path d="M14 1L6 14" stroke="#c9c8c0" stroke-width="0.8"/></svg>
<svg style="left:466px;top:593px" width="16" height="16" viewBox="0 0 16 16"><rect x="1" y="1" width="13" height="14" rx="2" fill="#dcdbd5"/><rect x="4" y="2" width="7" height="4" fill="#ececec"/><rect x="4" y="9" width="5" height="5" fill="#ececec"/><path d="M15 8L10 15" stroke="#c9c8c0" stroke-width="1.6"/></svg>
<svg style="left:491px;top:593px" width="16" height="16" viewBox="0 0 16 16"><path d="M0.8 8.2A7 7 0 0 1 13 3.3L15.2 1V8H8.4L11 5.4A4.2 4.2 0 0 0 3.9 8.2Z" fill="#5c97d6"/><path d="M15.2 7.8A7 7 0 0 1 3 12.7L0.8 15V8H7.6L5 10.6A4.2 4.2 0 0 0 12.1 7.8Z" fill="#3b73b5"/></svg>
<div class="abs" style="left:515px;top:596px;width:1px;height:11px;background:#c8c8c8;border-right:1px solid #fff"></div>
<svg style="left:524px;top:593px" width="16" height="16" viewBox="0 0 16 16"><rect x="0.5" y="1" width="14" height="13" rx="1" fill="#e6e6e2" stroke="#dcdbd5"/><path d="M1 4H14M1 7H14M1 10H14" stroke="#dcdbd5"/><rect x="8" y="8" width="8" height="8" fill="#c9c8c0"/></svg>
<svg style="left:547px;top:593px" width="16" height="16" viewBox="0 0 16 16"><rect x="2" y="1" width="9" height="12" fill="#e8e2e2" stroke="#d8d0d0"/><rect x="4" y="4" width="10" height="11" rx="1" fill="#ddd3d3" stroke="#cfc3c3" stroke-width="0.6"/><path d="M7 6V13M9 6V13M11 6V13" stroke="#e9e4e4"/></svg>
<svg style="left:573px;top:593px" width="16" height="16" viewBox="0 0 16 16"><circle cx="13" cy="5" r="2" fill="none" stroke="#c4bcbc" stroke-width="0.9"/><circle cx="13" cy="11" r="2" fill="none" stroke="#c4bcbc" stroke-width="0.9"/><path d="M1 3L11.5 10M1 13L11.5 6" stroke="#cfcaca" stroke-width="0.9"/></svg>
<svg style="left:597px;top:593px" width="16" height="16" viewBox="0 0 16 16"><rect x="6" y="1" width="7" height="10" rx="1" fill="#ebebeb" stroke="#dedede"/><rect x="2" y="4" width="8" height="11" rx="1" fill="#e4e4e4" stroke="#dadada"/></svg>
<svg style="left:622px;top:593px" width="16" height="16" viewBox="0 0 16 16"><rect x="2" y="1" width="11" height="14" rx="1.5" fill="#e4e4e4" stroke="#d8d8d8"/><rect x="4" y="4" width="7" height="9" fill="#ececec" stroke="#dcdcdc" stroke-width="0.6"/></svg>
<div class="abs" style="left:648px;top:596px;width:1px;height:11px;background:#c8c8c8;border-right:1px solid #fff"></div>
<svg style="left:655px;top:593px" width="16" height="16" viewBox="0 0 16 16"><rect x="5" y="6" width="10" height="9" rx="1.5" fill="#f1dd4d" stroke="#d9c23a" stroke-width="0.6"/><path d="M7.5 2.6C6 1 2 1.5 2 4C2 5.6 3.5 6.5 5 6.5C3 6.5 1.3 7.6 1.3 9.6C1.3 12.4 5 13 7.5 11.3" fill="none" stroke="#5b2a7a" stroke-width="1.5"/></svg>
<svg style="left:680px;top:593px" width="16" height="16" viewBox="0 0 16 16"><rect x="1" y="1" width="14" height="4" rx="1.5" fill="#f1dd4d" stroke="#d6c238" stroke-width="0.6"/><rect x="1" y="6" width="14" height="4" rx="1.5" fill="#f1dd4d" stroke="#d6c238" stroke-width="0.6"/><rect x="1" y="11" width="14" height="4" rx="1.5" fill="#f1dd4d" stroke="#d6c238" stroke-width="0.6"/></svg>
<svg style="left:705px;top:593px" width="16" height="16" viewBox="0 0 16 16"><rect x="1" y="1" width="14" height="14" rx="1" fill="#e9e9e9" stroke="#bbb" stroke-width="0.8"/><path d="M1 1L15 15H1Z" fill="#f1dd4d"/><path d="M1.5 1.5L14.5 14.5" stroke="#555" stroke-width="0.9"/></svg>
<svg style="left:730px;top:593px" width="16" height="16" viewBox="0 0 16 16"><rect x="1" y="1" width="10" height="10" rx="1.5" fill="#f1dd4d" stroke="#d6c238" stroke-width="0.6"/><rect x="8" y="8" width="8" height="8" rx="1.5" fill="#e23434"/><circle cx="12" cy="12" r="2.2" fill="none" stroke="#fff" stroke-width="0.9"/><path d="M10 14L14 10" stroke="#fff" stroke-width="0.9"/></svg>
<svg style="left:755px;top:593px" width="16" height="16" viewBox="0 0 16 16"><path d="M1 1.5H15L9.5 8V15.5L6.5 13.5V8Z" fill="#6e9bd0" stroke="#5580b5" stroke-width="0.6"/><rect x="2" y="2" width="12" height="2" fill="#f4e04a"/></svg>
<svg style="left:780px;top:593px" width="16" height="16" viewBox="0 0 16 16"><rect x="1" y="1" width="14" height="14" rx="1" fill="#c9dcf2" stroke="#8fb0d8" stroke-width="0.8"/><path d="M2 5H6M10 5H14M2 8H6M10 8H14" stroke="#fff"/><path d="M8 2L11 5H9V10H7V5H5Z" fill="#3a6aa8"/><rect x="2" y="11" width="12" height="3" fill="#f1dd4d"/></svg>
<svg style="left:805px;top:593px" width="16" height="16" viewBox="0 0 16 16"><rect x="3" y="3" width="9" height="9" rx="1" fill="#f1dd4d"/><path d="M8 0L11 3H5ZM8 16L5 13H11ZM0 8L3 5V11ZM16 8L13 11V5Z" fill="#5b8fcf"/><path d="M5 5L11 11M11 5L5 11" stroke="#5b8fcf" stroke-width="2"/></svg>
<svg style="left:830px;top:593px" width="16" height="16" viewBox="0 0 16 16"><rect x="1" y="2" width="8" height="9" rx="1" fill="#f1dd4d"/><circle cx="10" cy="6" r="5" fill="#f2f0e0" stroke="#444" stroke-width="0.9"/><path d="M6.5 9.5L1.5 14.5" stroke="#333" stroke-width="2.2"/><path d="M6 10L2 14" stroke="#f1c84d" stroke-width="1"/></svg>
<div class="abs" style="left:855px;top:596px;width:1px;height:11px;background:#c8c8c8;border-right:1px solid #fff"></div>
<svg style="left:863px;top:593px" width="16" height="16" viewBox="0 0 16 16"><rect x="1" y="1" width="13" height="14" rx="1" fill="#e8e8e6" stroke="#deded8"/><rect x="4" y="1" width="3" height="14" fill="#dcdbd3"/><rect x="9" y="9" width="7" height="7" fill="#d4d3cb"/></svg>
<svg style="left:887px;top:593px" width="16" height="16" viewBox="0 0 16 16"><rect x="1" y="1" width="13" height="14" rx="1" fill="#e8e8e6" stroke="#deded8"/><rect x="4" y="1" width="3" height="14" fill="#e2dede"/><rect x="9" y="9" width="7" height="7" fill="#d9d5d5"/><path d="M10.5 10.5L14.5 14.5M14.5 10.5L10.5 14.5" stroke="#f5f5f5"/></svg>
<svg style="left:912px;top:593px" width="16" height="16" viewBox="0 0 16 16"><rect x="1" y="1" width="14" height="14" rx="1" fill="#d4e2f4" stroke="#8fb0d8" stroke-width="0.8"/><path d="M3 5H6M3 8H13M3 11H13" stroke="#7fa2cf" stroke-width="0.8"/><path d="M14 1L5 14" stroke="#333" stroke-width="3"/><path d="M14 1L5 14" stroke="#ef8a3a" stroke-width="2"/></svg>
<svg style="left:936px;top:593px" width="16" height="16" viewBox="0 0 16 16"><path d="M1 15H15" stroke="#666" stroke-width="1.5"/><path d="M1.5 1V15M14.5 1V15" stroke="#888"/><path d="M1 4H15M1 9H15M1 13H15" stroke="#999" stroke-width="0.6"/><circle cx="6" cy="4" r="1.8" fill="#d33"/><circle cx="10" cy="4" r="1.8" fill="#d33"/><circle cx="4.5" cy="8" r="1.6" fill="#6c6"/><circle cx="7.5" cy="8" r="1.6" fill="#6c6"/><circle cx="4" cy="11.5" r="1.5" fill="#59d"/><circle cx="7.5" cy="11.5" r="1.5" fill="#59d"/><circle cx="11" cy="11.5" r="1.5" fill="#59d"/></svg>
<div class="abs" style="left:961px;top:596px;width:1px;height:11px;background:#c8c8c8;border-right:1px solid #fff"></div>
<svg style="left:969px;top:593px" width="16" height="16" viewBox="0 0 16 16"><rect x="1" y="1.5" width="14" height="3.5" rx="1" fill="#fff" stroke="#bbb" stroke-width="0.7"/><path d="M6 3.2H13" stroke="#555"/><rect x="1" y="6.3" width="14" height="3.5" rx="1" fill="#8fd08f" stroke="#6ab06a" stroke-width="0.7"/><path d="M5 8H13" stroke="#777"/><rect x="1" y="11" width="14" height="3.5" rx="1" fill="#fff" stroke="#bbb" stroke-width="0.7"/><path d="M3 12.8H4.5" stroke="#c00" stroke-width="1.2"/><path d="M5 12.8H13" stroke="#f99"/></svg>
<div class="abs" style="left:993px;top:596px;width:1px;height:11px;background:#c8c8c8;border-right:1px solid #fff"></div>
<svg style="left:1000px;top:593px" width="16" height="16" viewBox="0 0 16 16"><circle cx="7" cy="6.5" r="6" fill="#e8e8e8" stroke="#888" stroke-width="0.8" stroke-dasharray="2 1"/><circle cx="7" cy="6.5" r="4" fill="#5b8fd0"/><path d="M6 4.5V8.5L9 6.5Z" fill="#fff"/><path d="M10 9L15 14L13 15L11 12Z" fill="#fff" stroke="#666" stroke-width="0.8"/></svg>
<div class="abs" style="left:1022px;top:590px;width:24px;height:22px;border:1px solid #a8a8a8;border-radius:3px;background:#dcdcdc"></div>
<svg style="left:1026px;top:593px" width="16" height="16" viewBox="0 0 16 16"><rect x="3" y="1" width="12" height="11" fill="#fff" stroke="#888" stroke-width="0.7"/><rect x="3" y="1" width="12" height="2" fill="#555"/><rect x="1" y="6" width="9" height="9" rx="1" fill="#cfe0f3" stroke="#777" stroke-width="0.7"/><path d="M2 9H9M2 12H9M5 7V14" stroke="#fff" stroke-width="0.8"/></svg>
<div class="abs" style="left:408px;top:617px;width:1136px;height:180px;background:#fff;border:1px solid #b4b4b4"></div>
<div class="abs" style="left:409px;top:618px;width:1120px;height:164px;overflow:hidden">
<div class="abs" style="left:0;top:0;width:24px;height:20px;background:linear-gradient(#ffffff,#f3f3f3 55%,#e9e9e9)"></div>
<div class="abs" style="left:24px;top:0;width:100px;height:20px;line-height:20px;text-align:center;background:linear-gradient(#ffffff,#f3f3f3 55%,#e9e9e9);">省</div>
<div class="abs" style="left:124px;top:0;width:100px;height:20px;line-height:20px;text-align:center;background:linear-gradient(#ffffff,#f3f3f3 55%,#e9e9e9);border-left:1px solid #cfcfcf">市</div>
<div class="abs" style="left:224px;top:0;width:100px;height:20px;line-height:20px;text-align:center;background:linear-gradient(#ffffff,#f3f3f3 55%,#e9e9e9);border-left:1px solid #cfcfcf">区县</div>
<div class="abs" style="left:324px;top:0;width:100px;height:20px;line-height:20px;text-align:center;background:linear-gradient(#ffffff,#f3f3f3 55%,#e9e9e9);border-left:1px solid #cfcfcf">乡镇</div>
<div class="abs" style="left:424px;top:0;width:100px;height:20px;line-height:20px;text-align:center;background:linear-gradient(#ffffff,#f3f3f3 55%,#e9e9e9);border-left:1px solid #cfcfcf">道路等级</div>
<div class="abs" style="left:524px;top:0;width:100px;height:20px;line-height:20px;text-align:center;background:linear-gradient(#ffffff,#f3f3f3 55%,#e9e9e9);border-left:1px solid #cfcfcf">路名</div>
<div class="abs" style="left:624px;top:0;width:100px;height:20px;line-height:20px;text-align:center;background:linear-gradient(#ffffff,#f3f3f3 55%,#e9e9e9);border-left:1px solid #cfcfcf">单双向</div>
<div class="abs" style="left:724px;top:0;width:100px;height:20px;line-height:20px;text-align:center;background:linear-gradient(#ffffff,#f3f3f3 55%,#e9e9e9);border-left:1px solid #cfcfcf">别名</div>
<div class="abs" style="left:824px;top:0;width:100px;height:20px;line-height:20px;text-align:center;background:linear-gradient(#ffffff,#f3f3f3 55%,#e9e9e9);border-left:1px solid #cfcfcf">车道数</div>
<div class="abs" style="left:924px;top:0;width:100px;height:20px;line-height:20px;text-align:center;background:linear-gradient(#ffffff,#f3f3f3 55%,#e9e9e9);border-left:1px solid #cfcfcf">起点路段</div>
<div class="abs" style="left:1024px;top:0;width:100px;height:20px;line-height:20px;text-align:center;background:linear-gradient(#ffffff,#f3f3f3 55%,#e9e9e9);border-left:1px solid #cfcfcf">终点路段</div>
<div class="abs" style="left:0;top:20px;width:1120px;height:1px;background:#bdbdbd"></div>
<div class="abs" style="left:0;top:21px;width:24px;height:29px;background:linear-gradient(#fcfcfc,#f3f3f3 50%,#e9e9e9)"></div>
<div class="abs" style="left:3px;top:21px;height:29px;line-height:31px">1</div>
<div class="abs" style="left:25px;top:21px;width:1100px;height:29px;background:#ffffff"></div>
<div class="abs" style="left:0;top:50px;width:1120px;height:1px;background:#c9c9c9"></div>
<div class="cell null" style="left:25px;top:21px;width:99px;padding:0 4px;line-height:31px">NULL</div>
<div class="cell" style="left:125px;top:21px;width:99px;padding:0 4px;line-height:31px">上海市</div>
<div class="cell" style="left:225px;top:21px;width:99px;padding:0 4px;line-height:31px">宝山区</div>
<div class="cell" style="left:325px;top:21px;width:99px;padding:0 4px;line-height:31px">*</div>
<div class="cell num" style="left:425px;top:21px;width:99px;padding:0 4px;line-height:31px">3</div>
<div class="cell" style="left:525px;top:21px;width:99px;padding:0 4px;line-height:31px">沪太路</div>
<div class="cell" style="left:625px;top:21px;width:99px;padding:0 4px;line-height:31px">1</div>
<div class="cell null" style="left:725px;top:21px;width:99px;padding:0 4px;line-height:31px">NULL</div>
<div class="cell num" style="left:825px;top:21px;width:99px;padding:0 4px;line-height:31px">0</div>
<div class="cell null" style="left:925px;top:21px;width:99px;padding:0 4px;line-height:31px">NULL</div>
<div class="cell null" style="left:1025px;top:21px;width:99px;padding:0 4px;line-height:31px">NULL</div>
<div class="abs" style="left:0;top:51px;width:24px;height:29px;background:linear-gradient(#fcfcfc,#f3f3f3 50%,#e9e9e9)"></div>
<div class="abs" style="left:3px;top:51px;height:29px;line-height:31px">2</div>
<div class="abs" style="left:25px;top:51px;width:1100px;height:29px;background:#e8e7e3"></div>
<div class="abs" style="left:0;top:80px;width:1120px;height:1px;background:#c9c9c9"></div>
<div class="cell null" style="left:25px;top:51px;width:99px;padding:0 4px;line-height:31px">NULL</div>
<div class="cell" style="left:125px;top:51px;width:99px;padding:0 4px;line-height:31px">上海市</div>
<div class="cell" style="left:225px;top:51px;width:99px;padding:0 4px;line-height:31px">宝山区</div>
<div class="cell" style="left:325px;top:51px;width:99px;padding:0 4px;line-height:31px">*</div>
<div class="cell num" style="left:425px;top:51px;width:99px;padding:0 4px;line-height:31px">3</div>
<div class="cell" style="left:525px;top:51px;width:99px;padding:0 4px;line-height:31px">沪太路</div>
<div class="cell" style="left:625px;top:51px;width:99px;padding:0 4px;line-height:31px">1</div>
<div class="cell null" style="left:725px;top:51px;width:99px;padding:0 4px;line-height:31px">NULL</div>
<div class="cell num" style="left:825px;top:51px;width:99px;padding:0 4px;line-height:31px">0</div>
<div class="cell null" style="left:925px;top:51px;width:99px;padding:0 4px;line-height:31px">NULL</div>
<div class="cell null" style="left:1025px;top:51px;width:99px;padding:0 4px;line-height:31px">NULL</div>
<div class="abs" style="left:0;top:81px;width:24px;height:29px;background:linear-gradient(#fcfcfc,#f3f3f3 50%,#e9e9e9)"></div>
<div class="abs" style="left:3px;top:81px;height:29px;line-height:31px">3</div>
<div class="abs" style="left:25px;top:81px;width:1100px;height:29px;background:#ffffff"></div>
<div class="abs" style="left:0;top:110px;width:1120px;height:1px;background:#c9c9c9"></div>
<div class="cell null" style="left:25px;top:81px;width:99px;padding:0 4px;line-height:31px">NULL</div>
<div class="cell" style="left:125px;top:81px;width:99px;padding:0 4px;line-height:31px">上海市</div>
<div class="cell" style="left:225px;top:81px;width:99px;padding:0 4px;line-height:31px">宝山区</div>
<div class="cell" style="left:325px;top:81px;width:99px;padding:0 4px;line-height:31px">*</div>
<div class="cell num" style="left:425px;top:81px;width:99px;padding:0 4px;line-height:31px">3</div>
<div class="cell" style="left:525px;top:81px;width:99px;padding:0 4px;line-height:31px">场中路</div>
<div class="cell" style="left:625px;top:81px;width:99px;padding:0 4px;line-height:31px">2</div>
<div class="cell null" style="left:725px;top:81px;width:99px;padding:0 4px;line-height:31px">NULL</div>
<div class="cell num" style="left:825px;top:81px;width:99px;padding:0 4px;line-height:31px">0</div>
<div class="cell null" style="left:925px;top:81px;width:99px;padding:0 4px;line-height:31px">NULL</div>
<div class="cell null" style="left:1025px;top:81px;width:99px;padding:0 4px;line-height:31px">NULL</div>
<div class="abs" style="left:0;top:111px;width:24px;height:29px;background:linear-gradient(#fcfcfc,#f3f3f3 50%,#e9e9e9)"></div>
<div class="abs" style="left:3px;top:111px;height:29px;line-height:31px">4</div>
<div class="abs" style="left:25px;top:111px;width:1100px;height:29px;background:#e8e7e3"></div>
<div class="abs" style="left:0;top:140px;width:1120px;height:1px;background:#c9c9c9"></div>
<div class="cell null" style="left:25px;top:111px;width:99px;padding:0 4px;line-height:31px">NULL</div>
<div class="cell" style="left:125px;top:111px;width:99px;padding:0 4px;line-height:31px">上海市</div>
<div class="cell" style="left:225px;top:111px;width:99px;padding:0 4px;line-height:31px">宝山区</div>
<div class="cell" style="left:325px;top:111px;width:99px;padding:0 4px;line-height:31px">*</div>
<div class="cell num" style="left:425px;top:111px;width:99px;padding:0 4px;line-height:31px">3</div>
<div class="cell" style="left:525px;top:111px;width:99px;padding:0 4px;line-height:31px">沪太路</div>
<div class="cell" style="left:625px;top:111px;width:99px;padding:0 4px;line-height:31px">1</div>
<div class="cell null" style="left:725px;top:111px;width:99px;padding:0 4px;line-height:31px">NULL</div>
<div class="cell num" style="left:825px;top:111px;width:99px;padding:0 4px;line-height:31px">2</div>
<div class="cell null" style="left:925px;top:111px;width:99px;padding:0 4px;line-height:31px">NULL</div>
<div class="cell null" style="left:1025px;top:111px;width:99px;padding:0 4px;line-height:31px">NULL</div>
<div class="abs" style="left:0;top:141px;width:24px;height:29px;background:linear-gradient(#fcfcfc,#f3f3f3 50%,#e9e9e9)"></div>
<div class="abs" style="left:3px;top:141px;height:29px;line-height:31px">5</div>
<div class="abs" style="left:25px;top:141px;width:1100px;height:29px;background:#ffffff"></div>
<div class="abs" style="left:0;top:170px;width:1120px;height:1px;background:#c9c9c9"></div>
<div class="cell null" style="left:25px;top:141px;width:99px;padding:0 4px;line-height:31px">NULL</div>
<div class="cell" style="left:125px;top:141px;width:99px;padding:0 4px;line-height:31px">上海市</div>
<div class="cell" style="left:225px;top:141px;width:99px;padding:0 4px;line-height:31px">宝山区</div>
<div class="cell" style="left:325px;top:141px;width:99px;padding:0 4px;line-height:31px">*</div>
<div class="cell num" style="left:425px;top:141px;width:99px;padding:0 4px;line-height:31px">3</div>
<div class="cell" style="left:525px;top:141px;width:99px;padding:0 4px;line-height:31px">沪太路</div>
<div class="cell" style="left:625px;top:141px;width:99px;padding:0 4px;line-height:31px">1</div>
<div class="cell null" style="left:725px;top:141px;width:99px;padding:0 4px;line-height:31px">NULL</div>
<div class="cell num" style="left:825px;top:141px;width:99px;padding:0 4px;line-height:31px">2</div>
<div class="cell null" style="left:925px;top:141px;width:99px;padding:0 4px;line-height:31px">NULL</div>
<div class="cell null" style="left:1025px;top:141px;width:99px;padding:0 4px;line-height:31px">NULL</div>
<div class="abs" style="left:24px;top:21px;width:1px;height:150px;background:#c9c9c9"></div>
<div class="abs" style="left:124px;top:21px;width:1px;height:150px;background:#c9c9c9"></div>
<div class="abs" style="left:224px;top:21px;width:1px;height:150px;background:#c9c9c9"></div>
<div class="abs" style="left:324px;top:21px;width:1px;height:150px;background:#c9c9c9"></div>
<div class="abs" style="left:424px;top:21px;width:1px;height:150px;background:#c9c9c9"></div>
<div class="abs" style="left:524px;top:21px;width:1px;height:150px;background:#c9c9c9"></div>
<div class="abs" style="left:624px;top:21px;width:1px;height:150px;background:#c9c9c9"></div>
<div class="abs" style="left:724px;top:21px;width:1px;height:150px;background:#c9c9c9"></div>
<div class="abs" style="left:824px;top:21px;width:1px;height:150px;background:#c9c9c9"></div>
<div class="abs" style="left:924px;top:21px;width:1px;height:150px;background:#c9c9c9"></div>
<div class="abs" style="left:1024px;top:21px;width:1px;height:150px;background:#c9c9c9"></div>
<div class="abs" style="left:1124px;top:21px;width:1px;height:150px;background:#c9c9c9"></div>
</div>
<div class="abs" style="left:1529px;top:618px;width:14px;height:164px;background:#e2e2e2;border-left:1px solid #c8c8c8"></div>
<div class="abs" style="left:1529px;top:618px;width:14px;height:14px;background:linear-gradient(90deg,#fff,#f3f3f3);border-left:1px solid #c8c8c8;border-bottom:1px solid #c8c8c8"></div>
<svg style="left:1532px;top:622px" width="9" height="6"><path d="M0.5 5.5L4.5 1L8.5 5.5Z" fill="#444"/></svg>
<div class="abs" style="left:1529px;top:632px;width:14px;height:26px;background:linear-gradient(90deg,#fff,#f1f1f1);border-left:1px solid #c8c8c8;border-bottom:1px solid #c8c8c8"></div>
<div class="abs" style="left:1529px;top:768px;width:14px;height:14px;background:linear-gradient(90deg,#fff,#f3f3f3);border-left:1px solid #c8c8c8;border-top:1px solid #c8c8c8"></div>
<svg style="left:1532px;top:772px" width="9" height="6"><path d="M0.5 0.5L4.5 5L8.5 0.5Z" fill="#444"/></svg>
<div class="abs" style="left:409px;top:782px;width:1120px;height:14px;background:linear-gradient(#fdfdfd,#f1f1f1);border-top:1px solid #c8c8c8"></div>
<div class="abs" style="left:409px;top:782px;width:14px;height:14px;background:linear-gradient(#fff,#f3f3f3);border-top:1px solid #c8c8c8;border-right:1px solid #c8c8c8"></div>
<svg style="left:413px;top:785px" width="6" height="9"><path d="M5.5 0.5L1 4.5L5.5 8.5Z" fill="#444"/></svg>
<div class="abs" style="left:1510px;top:783px;width:5px;height:13px;background:#e2e2e2;border-left:1px solid #c8c8c8"></div>
<div class="abs" style="left:1515px;top:782px;width:14px;height:14px;background:linear-gradient(#fff,#f3f3f3);border-top:1px solid #c8c8c8;border-left:1px solid #c8c8c8"></div>
<svg style="left:1519px;top:785px" width="6" height="9"><path d="M0.5 0.5L5 4.5L0.5 8.5Z" fill="#444"/></svg>
<div class="abs" style="left:1529px;top:782px;width:14px;height:14px;background:#f0f0f0;border-top:1px solid #c8c8c8;border-left:1px solid #c8c8c8"></div>
<div class="abs" style="left:411px;top:800px;width:112px;height:23px;border:1px solid #adadad;border-radius:3px;background:linear-gradient(#fdfdfd,#ececec)"></div>
<svg style="left:415px;top:804px" width="14" height="14"><rect x="0.5" y="0.5" width="13" height="13" fill="#dbe6f3" stroke="#8fb0d8"/><path d="M1 3H13" stroke="#7fa2cf" stroke-width="2"/><path d="M2 6H4M5 6H12M2 8.5H4M5 8.5H12M2 11H4M5 11H12" stroke="#8fb0d8"/></svg>
<div class="t" style="left:432px;top:805px">显示所有要素</div>
<svg style="left:514px;top:816px" width="6" height="4"><path d="M0 0H6L3 3.5Z" fill="#555"/></svg>
<svg style="left:1498px;top:804px" width="14" height="14"><rect x="0.5" y="0.5" width="13" height="13" fill="#e6eef8" stroke="#9dbbe0"/><path d="M2 4H5M2 10H5" stroke="#2d4f7a" stroke-width="1"/><rect x="6" y="2.5" width="6" height="3" rx="1" fill="#fff" stroke="#7fa2cf" stroke-width="0.7"/><rect x="6" y="8.5" width="6" height="3" rx="1" fill="#fff" stroke="#7fa2cf" stroke-width="0.7"/></svg>
<div class="abs" style="left:1517px;top:800px;width:24px;height:23px;border:1px solid #a8a8a8;border-radius:3px;background:#dcdcdc"></div>
<svg style="left:1522px;top:804px" width="14" height="14"><rect x="0.5" y="0.5" width="13" height="13" fill="#dbe6f3" stroke="#8fb0d8"/><path d="M1 3H13" stroke="#7fa2cf" stroke-width="2"/><path d="M2 6H4M5 6H12M2 8.5H4M5 8.5H12M2 11H4M5 11H12" stroke="#8fb0d8"/></svg>
<div class="abs" style="left:-10px;top:829px;width:164px;height:22px;border:1px solid #adadad;border-radius:3px;background:#fff"></div>
<div class="t" style="left:-1px;top:832px;color:#7a7a7a"><span style="font-size:11px">索</span><span style="font-family:Liberation Mono,monospace;font-size:12px;letter-spacing:-1.2px"> (Ctrl+K)</span></div>
<div class="t" style="left:162px;top:833px"><span style="font-size:11px">平移距离</span><span style="font-family:Liberation Mono,monospace;font-size:12px;letter-spacing:-1.2px"> 4.490 </span><span style="font-size:11px">千米</span><span style="font-family:Liberation Mono,monospace;font-size:12px;letter-spacing:-1.2px"> (60.97183° W)</span></div>
<div class="t" style="left:1110px;top:833px;font-size:11px">坐标</div>
<div class="abs" style="left:1135px;top:829px;width:99px;height:22px;border:1px solid #adadad;border-radius:3px;background:#fff"></div>
<div class="t" style="left:1141px;top:833px"><span style="font-family:Liberation Mono,monospace;font-size:12px;letter-spacing:-1.6px">31.424, 120.596</span></div>
<svg style="left:1237px;top:831px" width="18" height="18"><g transform="rotate(-35 8.5 9)"><rect x="3.5" y="1.5" width="9" height="14" rx="4.5" fill="#fff" stroke="#111" stroke-width="1.3"/><path d="M3.5 7.5H12.5M8 1.5V7.5" stroke="#111" stroke-width="1.1"/><path d="M5.5 3V6.5M7 2.5V6.5" stroke="#222" stroke-width="0.9"/><circle cx="8" cy="11" r="1.4" fill="none" stroke="#111" stroke-width="1"/></g><path d="M13 3.5L14.5 2M15.5 4.5L16.5 3.5" stroke="#333" stroke-width="0.9"/><path d="M1 11.5L3 11" stroke="#333" stroke-width="0.9"/></svg>
<div class="t" style="left:1267px;top:833px;font-size:11px">比例</div>
<div class="abs" style="left:1292px;top:829px;width:83px;height:22px;border:1px solid #adadad;border-radius:3px;background:#fff"></div>
<div class="abs" style="left:1354px;top:830px;width:1px;height:20px;background:#c8c8c8"></div>
<svg style="left:1360px;top:837px" width="9" height="5"><path d="M0 0H9L4.5 4.5Z" fill="#555"/></svg>
<div class="t" style="left:1297px;top:833px"><span style="font-family:Liberation Mono,monospace;font-size:12px;letter-spacing:-1.3px">1:489130</span></div>
<svg style="left:1386px;top:831px" width="14" height="17"><path d="M3.5 8V5A3.5 3.5 0 0 1 10.5 5V8" stroke="#666" stroke-width="1.8" fill="none"/><rect x="1.5" y="8" width="11" height="8" rx="1.5" fill="#666"/></svg>
<div class="t" style="left:1408px;top:833px;font-size:11px">放大镜</div>
<div class="abs" style="left:1444px;top:830px;width:89px;height:20px;border:1px solid #adadad;border-radius:3px;background:#fff"></div>
<div class="abs" style="left:1518px;top:831px;width:1px;height:18px;background:#c8c8c8"></div>
<svg style="left:1521px;top:833px" width="9" height="14"><path d="M0.5 5L4.5 1L8.5 5Z" fill="#555"/><path d="M0.5 9L4.5 13L8.5 9Z" fill="#555"/></svg>
<div class="t" style="left:1449px;top:833px;font-size:11px;letter-spacing:-0.3px">100%</div>
<div class="t" style="left:1542px;top:833px">旋</div>
<div class="abs" style="left:0;top:854px;width:1507px;height:2px;background:#dadada"></div>
</body></html>
